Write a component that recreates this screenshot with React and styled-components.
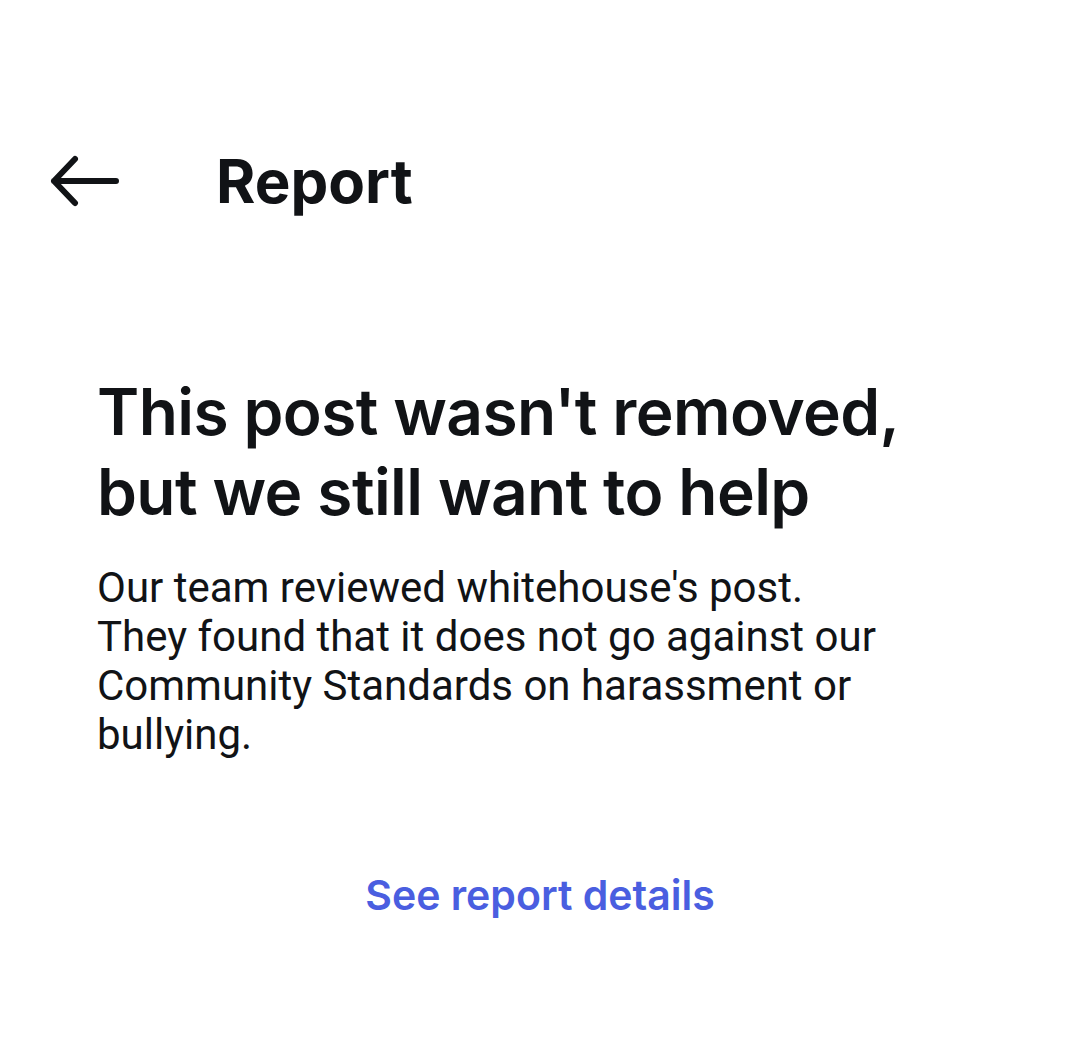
import styled, { createGlobalStyle } from "styled-components";

const GlobalStyle = createGlobalStyle`
  body {
    margin: 0;
    background: #ffffff;
  }
`;

const Page = styled.div`
  width: 1080px;
  height: 1038px;
  background: #ffffff;
  color: #111316;
  display: flex;
  flex-direction: column;
`;

const Header = styled.div`
  display: flex;
  align-items: center;
  height: 80px;
  margin-top: 141px;
  padding-left: 48px;
`;

const BackButton = styled.button`
  width: 72px;
  height: 52px;
  padding: 0;
  border: none;
  background: none;
  display: flex;
  align-items: center;
  cursor: pointer;
  color: #111316;
`;

const Title = styled.h1`
  margin: 0 0 0 96px;
  font-family: Inter, "Noto Sans", sans-serif;
  font-size: 60px;
  font-weight: 700;
  letter-spacing: 0;
`;

const Content = styled.div`
  padding: 151px 97px 0;
  display: flex;
  flex-direction: column;
`;

const Heading = styled.h2`
  margin: 0;
  font-family: Inter, "Noto Sans", sans-serif;
  font-size: 64px;
  line-height: 80px;
  font-weight: 600;
  letter-spacing: -0.6px;
`;

const Body = styled.p`
  margin: 31px 0 0;
  max-width: 800px;
  font-family: Roboto, "Noto Sans", sans-serif;
  font-size: 42px;
  line-height: 49px;
  font-weight: 400;
`;

const Link = styled.a`
  align-self: center;
  margin-top: 111px;
  font-family: Inter, "Noto Sans", sans-serif;
  font-size: 41px;
  font-weight: 600;
  color: #4a5ee0;
  text-decoration: none;
  cursor: pointer;
`;

const ArrowLeft = () => (
  <svg width="72" height="52" viewBox="0 0 72 52" fill="none">
    <path
      d="M68 26H6M27 4L6 26L27 48"
      stroke="currentColor"
      strokeWidth="6"
      strokeLinecap="round"
      strokeLinejoin="round"
    />
  </svg>
);

export default function App() {
  return (
    <Page>
      <GlobalStyle />
      <Header>
        <BackButton aria-label="Back">
          <ArrowLeft />
        </BackButton>
        <Title>Report</Title>
      </Header>
      <Content>
        <Heading>
          This post wasn't removed,
          <br />
          but we still want to help
        </Heading>
        <Body>
          Our team reviewed whitehouse's post.
          <br />
          They found that it does not go against our Community Standards on
          harassment or bullying.
        </Body>
        <Link>See report details</Link>
      </Content>
    </Page>
  );
}
